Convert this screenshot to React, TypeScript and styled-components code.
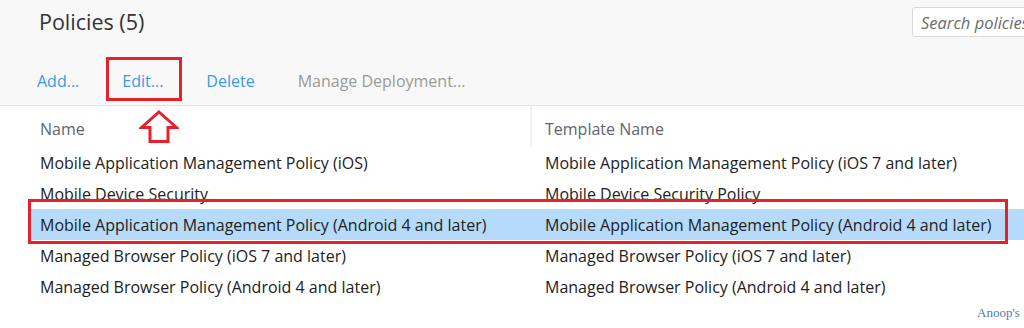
import React from "react";
import styled, { createGlobalStyle } from "styled-components";

const Global = createGlobalStyle`
  html, body { margin: 0; padding: 0; background: #ffffff; }
  body {
    width: 1024px;
    height: 328px;
    overflow: hidden;
    font-family: "Open Sans", "Noto Sans", "DejaVu Sans", sans-serif;
  }
`;

const Page = styled.div`
  position: relative;
  width: 1024px;
  height: 328px;
  overflow: hidden;
  background: #ffffff;
`;

const Header = styled.header`
  height: 105px;
  background: #f8f8f8;
  border-bottom: 1px solid #e2e2e2;
  display: flex;
  flex-direction: column;
`;

const TitleRow = styled.div`
  display: flex;
  align-items: flex-start;
  justify-content: space-between;
  padding: 7px 0 0 39px;
  height: 48px;
  box-sizing: border-box;
`;

const Title = styled.h1`
  margin: 1px 0 0 0;
  font-size: 21.5px;
  line-height: 28px;
  font-weight: 400;
  color: #333333;
`;

const SearchInput = styled.input`
  width: 140px;
  height: 30px;
  box-sizing: border-box;
  margin: 0 -28px 0 0;
  background: #ffffff;
  border: 1px solid #d9d9d9;
  border-radius: 3px;
  padding: 0 0 0 8px;
  outline: none;
  font-family: "Open Sans", "Noto Sans", sans-serif;
  font-size: 16.5px;
  font-style: italic;
  color: #333333;
  &::placeholder {
    color: #6b6b6b;
    opacity: 1;
  }
`;

const Toolbar = styled.nav`
  display: flex;
  align-items: flex-start;
  gap: 43px;
  padding: 23px 0 0 37px;
  height: 57px;
  box-sizing: border-box;
`;

const Action = styled.span<{ $disabled?: boolean }>`
  position: relative;
  font-size: 16px;
  line-height: 20px;
  color: ${(p) => (p.$disabled ? "#9a9a9a" : "#3a98e4")};
  white-space: nowrap;
`;

const Callout = styled.span`
  position: absolute;
  left: -16px;
  top: -14px;
  width: 76px;
  height: 44px;
  box-sizing: border-box;
  border: 3px solid #e8202a;
  pointer-events: none;
`;

const Table = styled.div`
  margin-left: 30px;
  display: grid;
  grid-template-columns: 500px 1fr;
`;

const HeadCell = styled.div<{ $sep?: boolean }>`
  height: 41px;
  box-sizing: border-box;
  padding: 12px 0 0 ${(p) => (p.$sep ? "13px" : "10px")};
  font-size: 16px;
  line-height: 22px;
  color: #5d6670;
  ${(p) => (p.$sep ? `border-left: 2px solid #eef1f5;` : ``)}
`;

const Row = styled.div<{ $selected?: boolean }>`
  display: contents;
  & > div {
    background: ${(p) => (p.$selected ? "#b6dafa" : "transparent")};
  }
`;

const Cell = styled.div<{ $second?: boolean }>`
  height: 31px;
  box-sizing: border-box;
  display: flex;
  align-items: center;
  padding-left: ${(p) => (p.$second ? "15px" : "10px")};
  font-size: 16px;
  color: #222222;
  white-space: nowrap;
`;

const RowCallout = styled.div`
  position: absolute;
  left: 28px;
  top: 199px;
  width: 980px;
  height: 45px;
  box-sizing: border-box;
  border: 3px solid #e8202a;
  pointer-events: none;
`;

const ArrowWrap = styled.svg`
  position: absolute;
  left: 139px;
  top: 110px;
`;

const Watermark = styled.span`
  position: absolute;
  left: 977px;
  top: 305px;
  font-family: "Liberation Serif", "DejaVu Serif", serif;
  font-size: 13px;
  color: #5676ad;
  white-space: nowrap;
`;

const rows = [
  ["Mobile Application Management Policy (iOS)", "Mobile Application Management Policy (iOS 7 and later)"],
  ["Mobile Device Security", "Mobile Device Security Policy"],
  ["Mobile Application Management Policy (Android 4 and later)", "Mobile Application Management Policy (Android 4 and later)"],
  ["Managed Browser Policy (iOS 7 and later)", "Managed Browser Policy (iOS 7 and later)"],
  ["Managed Browser Policy (Android 4 and later)", "Managed Browser Policy (Android 4 and later)"],
];

export default function App() {
  return (
    <Page>
      <Global />
      <Header>
        <TitleRow>
          <Title>Policies (5)</Title>
          <SearchInput type="text" placeholder="Search policies" />
        </TitleRow>
        <Toolbar>
          <Action>Add...</Action>
          <Action>
            Edit...
            <Callout />
          </Action>
          <Action>Delete</Action>
          <Action $disabled>Manage Deployment...</Action>
        </Toolbar>
      </Header>
      <Table>
        <HeadCell>Name</HeadCell>
        <HeadCell $sep>Template Name</HeadCell>
        {rows.map((r, i) => (
          <Row key={i} $selected={i === 2}>
            <Cell>{r[0]}</Cell>
            <Cell $second>{r[1]}</Cell>
          </Row>
        ))}
      </Table>
      <RowCallout />
      <ArrowWrap width="40" height="34" viewBox="0 0 40 34">
        <path
          d="M20 2 L37.5 17.5 L29 17.5 L29 31.5 L11 31.5 L11 17.5 L2.5 17.5 Z"
          fill="#ffffff"
          stroke="#e8202a"
          strokeWidth="3"
          strokeLinejoin="miter"
        />
      </ArrowWrap>
      <Watermark>Anoop's</Watermark>
    </Page>
  );
}
